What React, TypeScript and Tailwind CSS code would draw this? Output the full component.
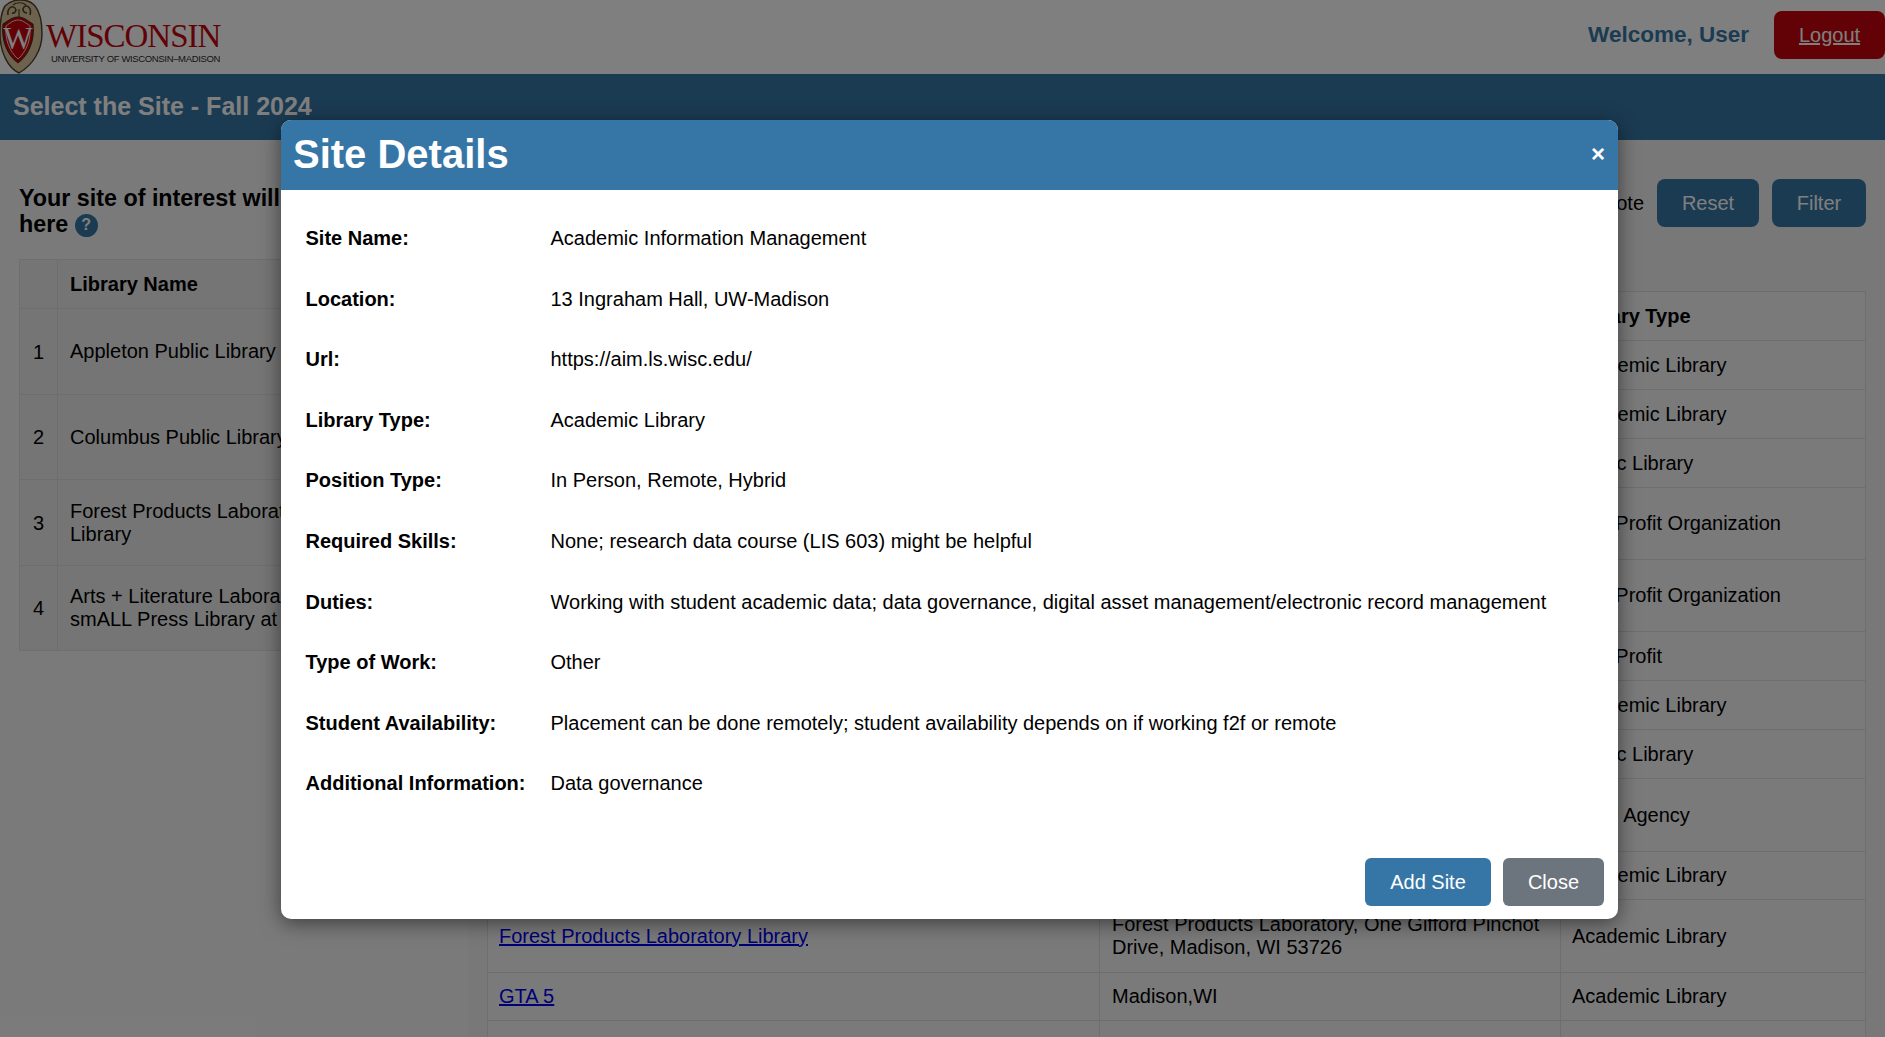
const rows: [string, string, string, string][] = [
  ["h-[49px]", "Academic Information Management", "13 Ingraham Hall, UW-Madison", "Academic Library"],
  ["h-[49px]", "Archives", "Madison, WI", "Academic Library"],
  ["h-[49px]", "Appleton Public Library", "Appleton, WI", "Public Library"],
  ["h-[72px]", "Arts + Literature Laboratory", "Madison, WI", "Non-Profit Organization"],
  ["h-[72px]", "Arts + Literature Laboratory", "Madison, WI", "Non-Profit Organization"],
  ["h-[49px]", "Bethel", "Madison, WI", "Non-Profit"],
  ["h-[49px]", "College Library", "Madison, WI", "Academic Library"],
  ["h-[49px]", "Columbus Public Library", "Columbus, WI", "Public Library"],
  ["h-[73px]", "DPI", "Madison, WI", "State Agency"],
  ["h-[48px]", "Ebling Library", "Madison, WI", "Academic Library"],
  ["h-[73px]", "Forest Products Laboratory Library", "Forest Products Laboratory, One Gifford Pinchot Drive, Madison, WI 53726", "Academic Library"],
  ["h-[48px]", "GTA 5", "Madison,WI", "Academic Library"],
  ["h-[49px]", "IRB", "Nancy Nicholas Hall", "State Agency"],
];

const details: [string, string][] = [
  ["Site Name:", "Academic Information Management"],
  ["Location:", "13 Ingraham Hall, UW-Madison"],
  ["Url:", "https://aim.ls.wisc.edu/"],
  ["Library Type:", "Academic Library"],
  ["Position Type:", "In Person, Remote, Hybrid"],
  ["Required Skills:", "None; research data course (LIS 603) might be helpful"],
  ["Duties:", "Working with student academic data; data governance, digital asset management/electronic record management"],
  ["Type of Work:", "Other"],
  ["Student Availability:", "Placement can be done remotely; student availability depends on if working f2f or remote"],
  ["Additional Information:", "Data governance"],
];

const selected: [string, string, string][] = [
  ["1", "Appleton Public Library", "h-[86px]"],
  ["2", "Columbus Public Library", "h-[85px]"],
  ["3", "Forest Products Laboratory Library", "h-[86px]"],
  ["4", "Arts + Literature Laboratory smALL Press Library at ALL", "h-[85px]"],
];

function Crest() {
  return (
    <svg width="43" height="74" viewBox="0 0 43 74" className="shrink-0">
      <path d="M20 0 C26 0 31 1 35 6 C40 12 42 24 42 34 C42 50 33 65 19 73 C8 68 0 52 0 34 C0 22 1 12 5 6 C9 2 14 0 20 0 Z" fill="#d9c59c" stroke="#4f4028" strokeWidth="1.4" />
      <path d="M8 15 C7 8 12 5 15 8 C17 10 15 14 12 13 M30 15 C32 8 27 4 24 7 C22 9 23 13 27 13" fill="none" stroke="#4f4028" strokeWidth="1.6" />
      <path d="M13 5 C16 2 23 2 26 5 M19 9 L19 18" fill="none" stroke="#4f4028" strokeWidth="1.2" />
      <path d="M3 24 C9 20 13 17 18 17 C24 17 28 21 33 24 C35 40 29 55 18 63 C7 55 1 40 3 24 Z" fill="#c5050c" stroke="#3a2c18" strokeWidth="1" />
      <path d="M6 26 C10 23 14 20 18 20 C22 20 26 23 30 26 C31 39 27 51 18 59 C9 51 5 39 6 26 Z" fill="none" stroke="#ffffff" strokeWidth="0.8" />
      <text x="18" y="49" textAnchor="middle" fontFamily="'Liberation Serif', serif" fontSize="31" fontWeight="400" fill="#ffffff">W</text>
    </svg>
  );
}

export default function App() {
  return (
    <div className="relative h-[1037px] w-[1885px] overflow-hidden bg-white font-['Liberation_Sans',Arial,sans-serif] text-[20px] text-black">
      <header className="flex h-[74px] items-start justify-between bg-white">
        <div className="flex h-full items-start">
          <Crest />
          <div className="ml-[3px] flex flex-col">
            <span className="mt-[18px] font-['Liberation_Serif',serif] text-[33px] leading-[37px] tracking-[-1px] text-[#c5050c]">WISCONSIN</span>
            <span className="ml-[5px] -mt-[1px] whitespace-nowrap text-[9.5px] leading-[9px] tracking-[-0.35px] text-[#2a2a2a]">UNIVERSITY OF WISCONSIN–MADISON</span>
          </div>
        </div>
        <div className="flex items-center pt-[11px]">
          <span className="text-[22.5px] font-bold text-[#3676a6]">Welcome, User</span>
          <a className="ml-[25px] flex h-[48px] w-[111px] items-center justify-center rounded-lg bg-[#c5050c] text-white underline">Logout</a>
        </div>
      </header>

      <div className="flex h-[66px] items-center bg-[#3676a6] pl-[13px]">
        <h1 className="text-[25px] font-bold text-white">Select the Site - Fall 2024</h1>
      </div>

      <main className="flex h-[897px] bg-[#f5f5f5]">
        <aside className="w-[468px] shrink-0 pl-[19px] pt-[45px]">
          <h2 className="w-[432px] text-[23.3px] leading-[26px] font-bold">
            Your site of interest will be displayed here{" "}
            <span className="inline-flex h-[23px] w-[23px] items-center justify-center rounded-full bg-[#3676a6] align-[2px] text-[16px] font-bold text-white">?</span>
          </h2>
          <table className="mt-[22px] w-[432px] table-fixed border-collapse bg-[#ebebeb]">
            <colgroup>
              <col className="w-[38px]" />
              <col className="w-[285px]" />
              <col className="w-[109px]" />
            </colgroup>
            <thead>
              <tr className="h-[49px]">
                <th className="border border-[#dddddd]"></th>
                <th className="border border-[#dddddd] pl-[12px] text-left font-bold">Library Name</th>
                <th className="border border-[#dddddd]"></th>
              </tr>
            </thead>
            <tbody>
              {selected.map(([n, name, h]) => (
                <tr key={n} className={h}>
                  <td className="border border-[#dddddd] text-center">{n}</td>
                  <td className="border border-[#dddddd] px-[12px] leading-[23px]">{name}</td>
                  <td className="border border-[#dddddd]"></td>
                </tr>
              ))}
            </tbody>
          </table>
        </aside>

        <section className="flex-1 bg-[#f1f1f1] pl-[19px] pr-[20px]">
          <div className="mt-[39px] flex h-[48px] items-center justify-end">
            <span>Remote</span>
            <button className="ml-[13px] h-[48px] w-[102px] rounded-lg bg-[#3676a6] text-white">Reset</button>
            <button className="ml-[13px] h-[48px] w-[94px] rounded-lg bg-[#3676a6] text-white">Filter</button>
          </div>
          <table className="mt-[64px] w-[1378px] table-fixed border-collapse bg-[#f5f5f5]">
            <colgroup>
              <col className="w-[612px]" />
              <col className="w-[461px]" />
              <col className="w-[305px]" />
            </colgroup>
            <thead>
              <tr className="h-[49px]">
                <th className="border border-[#dddddd] px-[11px] text-left font-bold">Library Name</th>
                <th className="border border-[#dddddd] px-[12px] text-left font-bold">Location</th>
                <th className="border border-[#dddddd] px-[11px] text-left font-bold">Library Type</th>
              </tr>
            </thead>
            <tbody>
              {rows.map(([h, name, loc, type]) => (
                <tr key={name + type + h + loc} className={h}>
                  <td className="border border-[#dddddd] px-[11px] leading-[23px]">
                    <a className="text-[#0000ee] underline">{name}</a>
                    {name === "IRB" && (
                      <span className="ml-[10px] inline-block h-[16px] w-[16px] rounded-full bg-[#9ca3af] align-[-2px]"></span>
                    )}
                  </td>
                  <td className="border border-[#dddddd] px-[12px] leading-[23px]">{loc}</td>
                  <td className="border border-[#dddddd] px-[11px] leading-[23px]">{type}</td>
                </tr>
              ))}
            </tbody>
          </table>
        </section>
      </main>

      <div className="absolute inset-0 bg-black/50"></div>

      <div className="absolute left-[281px] top-[120px] flex h-[799px] w-[1337px] flex-col overflow-hidden rounded-[10px] bg-white shadow-[0_4px_20px_rgba(0,0,0,0.5)]">
        <div className="flex h-[70px] shrink-0 items-center justify-between bg-[#3676a6] pb-[2px] pl-[12px] pr-[13px] text-white">
          <span className="text-[40px] font-bold">Site Details</span>
          <span className="text-[24px] font-bold">×</span>
        </div>
        <div className="flex flex-1 flex-col pl-[24.5px] pt-[18px]">
          {details.map(([label, value]) => (
            <div key={label} className="flex h-[60.55px] shrink-0 items-center">
              <span className="w-[245px] shrink-0 font-bold">{label}</span>
              <span>{value}</span>
            </div>
          ))}
        </div>
        <div className="flex justify-end gap-[12px] pb-[13px] pr-[14px]">
          <button className="h-[48px] w-[126px] rounded-md bg-[#3676a6] text-white">Add Site</button>
          <button className="h-[48px] w-[101px] rounded-md bg-[#6c757d] text-white">Close</button>
        </div>
      </div>
    </div>
  );
}
